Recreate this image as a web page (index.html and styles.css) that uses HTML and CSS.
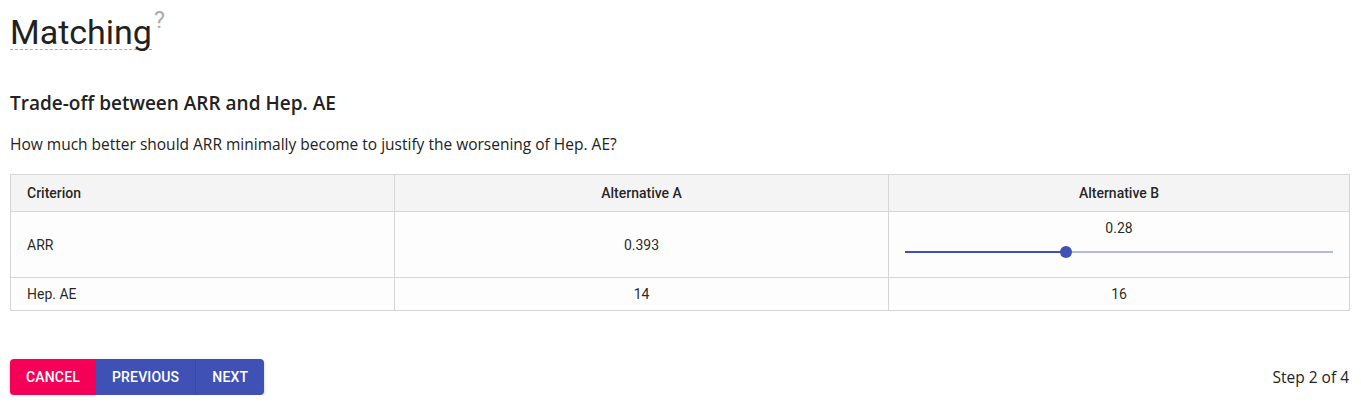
FILE: index.html
```html
<!DOCTYPE html>
<html>
<head>
<meta charset="utf-8">
<link rel="stylesheet" href="styles.css">
</head>
<body>
<div class="page">
  <h1 class="title"><span class="title-text">Matching</span><sup class="help">?</sup></h1>
  <h3 class="subtitle">Trade-off between ARR and Hep. AE</h3>
  <p class="question">How much better should ARR minimally become to justify the worsening of Hep. AE?</p>
  <table class="tbl">
    <thead>
      <tr>
        <th class="c1">Criterion</th>
        <th class="c2">Alternative A</th>
        <th class="c3">Alternative B</th>
      </tr>
    </thead>
    <tbody>
      <tr class="row-tall">
        <td class="left">ARR</td>
        <td>0.393</td>
        <td class="slider-cell">
          <div class="slider-value">0.28</div>
          <div class="slider">
            <div class="track-active" style="width: 37.5%"></div>
            <div class="thumb"></div>
            <div class="track-rest"></div>
          </div>
        </td>
      </tr>
      <tr class="row-short">
        <td class="left">Hep. AE</td>
        <td>14</td>
        <td>16</td>
      </tr>
    </tbody>
  </table>
  <div class="footer">
    <div class="btn-group">
      <button class="btn btn-cancel">Cancel</button>
      <button class="btn btn-primary">Previous</button>
      <button class="btn btn-primary btn-last">Next</button>
    </div>
    <div class="step">Step 2 of 4</div>
  </div>
</div>
</body>
</html>
```
FILE: styles.css
```css
* { box-sizing: border-box; }
html, body { margin: 0; padding: 0; background: #fff; }
body { font-family: "Open Sans", sans-serif; color: #222; }
.page { padding: 0 11px 0 10px; }

.title {
  margin: 0;
  padding-top: 10px;
  font-family: Roboto, sans-serif;
  font-weight: 400;
  font-size: 34px;
  line-height: 44px;
  color: #212121;
}
.title-text {
  border-bottom: 1px dashed #aaa;
  display: inline-block;
  line-height: 34px;
}
.help {
  font-size: 23px;
  color: #aaa;
  vertical-align: top;
  position: relative;
  top: -11px;
  margin-left: 2px;
}

.subtitle {
  margin: 37px 0 0 0;
  font-size: 19px;
  font-weight: 600;
  line-height: 24px;
  color: #222;
}
.question {
  margin: 18px 0 0 0;
  font-size: 15.5px;
  line-height: 22px;
  color: #222;
}

.tbl {
  margin-top: 19px;
  width: 100%;
  border-collapse: collapse;
  font-family: Roboto, sans-serif;
  font-size: 14px;
  color: rgba(0,0,0,0.87);
  border: 1px solid #d6d6d6;
}
.tbl th, .tbl td {
  border: 1px solid #d6d6d6;
  padding: 0 16px;
  text-align: center;
}
.tbl th {
  background: #f4f4f4;
  font-size: 14px;
  font-weight: 500;
  height: 37px;
}
.tbl td { background: #fdfdfd; }
.tbl .c1 { width: 384px; text-align: left; }
.tbl .c2 { width: 494px; }
.tbl .left { text-align: left; }
.row-tall td { height: 66px; }
.row-short td { height: 33px; }

.slider-cell { vertical-align: top; padding-top: 8px !important; }
.slider-value { line-height: 16px; }
.slider {
  display: flex;
  align-items: center;
  height: 14px;
  margin-top: 9px;
}
.track-active { height: 2px; background: #3f51b5; }
.thumb {
  width: 12px; height: 12px; border-radius: 50%;
  background: #3f51b5;
  margin: 0 -6px;
  position: relative;
  z-index: 1;
}
.track-rest { flex: 1; height: 2px; background: #b2b9e1; }

.footer {
  margin-top: 48px;
  display: flex;
  align-items: center;
  justify-content: space-between;
}
.btn-group {
  display: flex;
  border-radius: 4px;
  overflow: hidden;
  box-shadow: 0 3px 1px -2px rgba(0,0,0,0.2), 0 2px 2px 0 rgba(0,0,0,0.14), 0 1px 5px 0 rgba(0,0,0,0.12);
}
.btn {
  border: none;
  height: 36px;
  padding: 0 16px;
  font-family: Roboto, sans-serif;
  font-weight: 500;
  font-size: 14px;
  text-transform: uppercase;
  color: #fff;
  letter-spacing: 0.012em;
}
.btn-cancel { background: #f50057; }
.btn-primary { background: #3f51b5; }
.btn-last { border-left: 1px solid #3848a2; }
.step {
  font-size: 15.5px;
  color: #222;
  padding-right: 1px;
}
```
